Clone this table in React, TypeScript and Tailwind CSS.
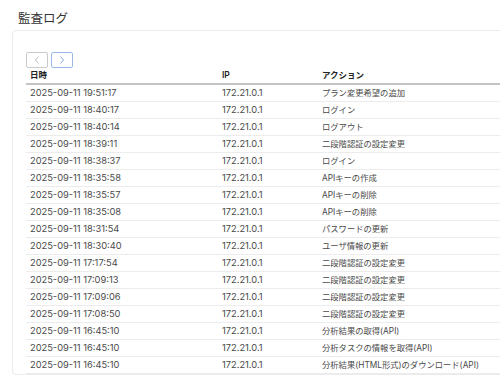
import React from "react";

const rows: [string, string][] = [
  ["2025-09-11 19:51:17", "プラン変更希望の追加"],
  ["2025-09-11 18:40:17", "ログイン"],
  ["2025-09-11 18:40:14", "ログアウト"],
  ["2025-09-11 18:39:11", "二段階認証の設定変更"],
  ["2025-09-11 18:38:37", "ログイン"],
  ["2025-09-11 18:35:58", "APIキーの作成"],
  ["2025-09-11 18:35:57", "APIキーの削除"],
  ["2025-09-11 18:35:08", "APIキーの削除"],
  ["2025-09-11 18:31:54", "パスワードの更新"],
  ["2025-09-11 18:30:40", "ユーザ情報の更新"],
  ["2025-09-11 17:17:54", "二段階認証の設定変更"],
  ["2025-09-11 17:09:13", "二段階認証の設定変更"],
  ["2025-09-11 17:09:06", "二段階認証の設定変更"],
  ["2025-09-11 17:08:50", "二段階認証の設定変更"],
  ["2025-09-11 16:45:10", "分析結果の取得(API)"],
  ["2025-09-11 16:45:10", "分析タスクの情報を取得(API)"],
  ["2025-09-11 16:45:10", "分析結果(HTML形式)のダウンロード(API)"],
];

const font = "font-['Inter','Noto_Sans_CJK_JP',sans-serif]";

export default function App() {
  return (
    <div className={`w-[500px] h-[375px] overflow-hidden bg-white ${font}`}>
      <div className="pl-[18px] pt-[11px] h-[30px] text-[12.5px] leading-[16px] text-[#333]">監査ログ</div>
      <div className="ml-[12px] w-[600px] border border-[#ebebeb] rounded-[4px] bg-white pl-[13px] pt-[21px]">
        <div className="flex gap-[3px] h-[16px]">
          <div className="w-[22px] h-[16px] border border-[#c9c9c9] rounded-[2px] flex items-center justify-center">
            <svg width="6" height="8" viewBox="0 0 6 8">
              <polyline points="4.5,0.5 1.5,4 4.5,7.5" fill="none" stroke="#b5b5b5" strokeWidth="0.9" />
            </svg>
          </div>
          <div className="w-[22px] h-[16px] border border-[#9fb8e8] rounded-[2px] flex items-center justify-center">
            <svg width="6" height="8" viewBox="0 0 6 8">
              <polyline points="1.5,0.5 4.5,4 1.5,7.5" fill="none" stroke="#7d9bd6" strokeWidth="0.9" />
            </svg>
          </div>
        </div>
        <div className="w-[580px]">
          <div className="flex h-[17px] items-center border-b-2 border-[#c4c4c4] text-[8.5px] font-semibold text-[#222]">
            <div className="w-[192px] pl-[4px]">日時</div>
            <div className="w-[100px] pl-[4px]">IP</div>
            <div className="pl-[4px]">アクション</div>
          </div>
          {rows.map(([d, a], i) => (
            <div key={i} className="flex h-[17px] items-center border-b border-[#ececec] text-[#4a4a4a]">
              <div className="w-[192px] pl-[4px] text-[9.3px]">{d}</div>
              <div className="w-[100px] pl-[4px] text-[9.3px]">172.21.0.1</div>
              <div className="pl-[4px] text-[8.3px]">{a}</div>
            </div>
          ))}
        </div>
      </div>
    </div>
  );
}
